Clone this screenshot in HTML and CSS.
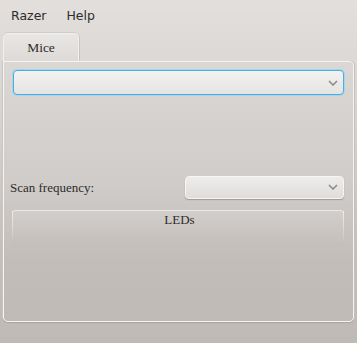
FILE: index.html
```html
<!DOCTYPE html>
<html>
<head>
<meta charset="utf-8">
<link rel="stylesheet" href="styles.css">
</head>
<body>
<div class="window">
  <div class="menubar">
    <span class="menu-item">Razer</span>
    <span class="menu-item">Help</span>
  </div>
  <div class="tabs">
    <div class="tabbar">
      <div class="tab active">Mice</div>
    </div>
    <div class="pane">
      <div class="combo main-combo">
        <svg class="arrow" width="10" height="6" viewBox="0 0 10 6"><path d="M1 1 L5 5 L9 1" fill="none" stroke="#8a8785" stroke-width="1.5"/></svg>
      </div>
      <div class="spacer"></div>
      <div class="row">
        <span class="label">Scan frequency:</span>
        <div class="combo small-combo">
          <svg class="arrow" width="10" height="6" viewBox="0 0 10 6"><path d="M1 1 L5 5 L9 1" fill="none" stroke="#8a8785" stroke-width="1.5"/></svg>
        </div>
      </div>
      <div class="group">
        <div class="group-title">LEDs</div>
      </div>
    </div>
  </div>
</div>
</body>
</html>
```
FILE: styles.css
```css
html, body {
  margin: 0;
  padding: 0;
}
body {
  width: 357px;
  height: 343px;
  overflow: hidden;
  background: linear-gradient(to bottom, #e2dfdc 0px, #d6d2cf 120px, #c4bfbb 250px, #bfbab6 343px);
  font-family: "Liberation Serif", serif;
  color: #2e2c2b;
}
.window {
  display: flex;
  flex-direction: column;
  height: 343px;
}
.menubar {
  display: flex;
  height: 32px;
  align-items: center;
  padding-left: 11px;
  gap: 20px;
  font-family: "DejaVu Sans", sans-serif;
  font-size: 12.5px;
  color: #2e2c2b;
}
.menubar .menu-item {
  padding-bottom: 1px;
}
.tabs {
  display: flex;
  flex-direction: column;
  margin: 1px 3px 0 3px;
}
.tabbar {
  display: flex;
  height: 28px;
  position: relative;
  z-index: 2;
}
.tab {
  width: 76px;
  height: 28px;
  box-sizing: border-box;
  border: 1px solid #f2f0ee;
  border-bottom: none;
  border-radius: 5px 5px 0 0;
  background: linear-gradient(to bottom, #e9e7e5, #dcd9d6);
  box-shadow: 0 -1px 0 #cfcbc8, 1px 0 0 #c9c5c2;
  text-align: center;
  font-size: 13.5px;
  line-height: 27px;
  color: #2e2c2b;
}
.pane {
  height: 261px;
  box-sizing: border-box;
  border: 1px solid #f5f4f2;
  border-radius: 0 5px 5px 5px;
  box-shadow: 0 1px 1px #a9a4a0, 1px 0 0 #c9c5c2, -1px 0 0 #cdc9c5;
  padding: 8px 8px 0 8px;
  display: flex;
  flex-direction: column;
  background: linear-gradient(to bottom, #dad7d4 0px, #d0ccc9 120px, #c2bdb9 200px, #bfbab6 260px);
}
.combo {
  box-sizing: border-box;
  border-radius: 4px;
  background: linear-gradient(to bottom, #f3f2f1, #e6e4e2);
  display: flex;
  align-items: center;
  justify-content: flex-end;
  padding-right: 5px;
}
.main-combo {
  height: 25px;
  border: 1px solid #49aee0;
  box-shadow: 0 0 0 1px #a5d6ef;
  margin-left: 1px;
  margin-right: 1px;
}
.spacer {
  height: 80px;
}
.row {
  display: flex;
  align-items: center;
  justify-content: space-between;
  height: 24px;
}
.label {
  font-size: 13px;
  margin-left: -2px;
  margin-top: 2px;
}
.small-combo {
  width: 159px;
  height: 23px;
  border: 1px solid #f6f5f4;
  box-shadow: 0 1px 1px #9f9a96;
  margin-right: 1px;
  background: linear-gradient(to bottom, #eeedeb, #e0dddb);
}
.group {
  margin-top: 11px;
  margin-right: 1px;
  height: 36px;
  border-radius: 4px 4px 0 0;
  border-top: 1px solid #ebe9e7;
  background: linear-gradient(to bottom, #d2cecb, #c3beba);
  position: relative;
}
.group::before, .group::after {
  content: "";
  position: absolute;
  top: 0;
  width: 1px;
  height: 32px;
  background: linear-gradient(to bottom, #efedeb, rgba(239,237,235,0));
}
.group::before { left: 0; }
.group::after { right: 0; }
.group-title {
  text-align: center;
  font-size: 13px;
  margin-top: 1px;
  padding-left: 3px;
}
```
